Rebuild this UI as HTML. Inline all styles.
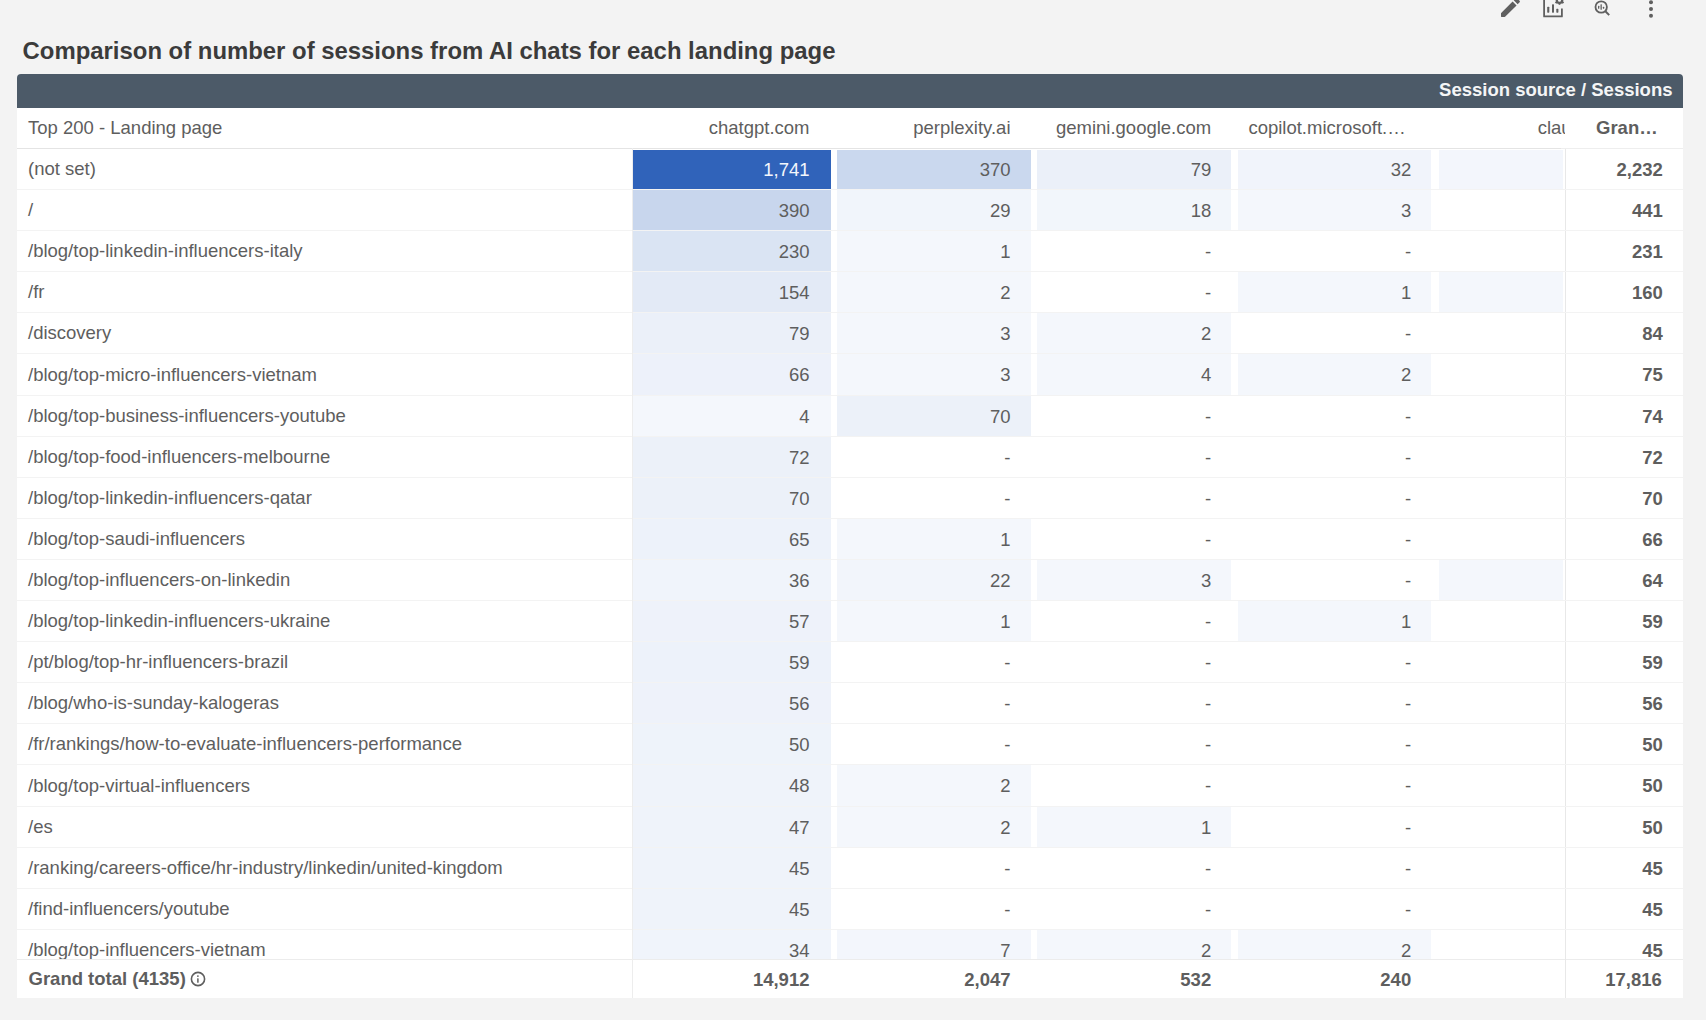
<!DOCTYPE html>
<html><head><meta charset="utf-8"><style>
html,body{margin:0;padding:0}
body{width:1706px;height:1020px;background:#f3f3f3;position:relative;overflow:hidden;font-family:"Liberation Sans",sans-serif}
.a{position:absolute;white-space:nowrap}
.t{font-size:18.5px;color:#5e5e5e;line-height:20px}
.n{text-align:right}
.b{font-weight:bold}
.r{position:absolute;height:1px;background:#f3f3f3}
</style></head><body>

<div class="a" style="left:22.6px;top:36.7px;font-size:23.9px;font-weight:bold;color:#3b3b3b;line-height:28px">Comparison of number of sessions from AI chats for each landing page</div>
<svg class="a" style="left:1490px;top:0px" width="180" height="24" viewBox="1490 0 180 24">
<path transform="translate(1497.85,-5.05) scale(1.05)" fill="#5f5f5f" d="M3 17.46v3.04c0 .28.22.5.5.5h3.04c.13 0 .26-.05.35-.15L17.81 9.94l-3.75-3.75L3.15 17.1c-.1.1-.15.22-.15.36zM20.71 7.04c.39-.39.39-1.02 0-1.41l-2.34-2.34c-.39-.39-1.02-.39-1.41 0l-1.83 1.83 3.75 3.75 1.83-1.83z"/>
<g fill="none" stroke="#5f5f5f" stroke-width="1.8" stroke-linejoin="round">
<path d="M1544.1 -4 V16.4 H1561.9 V8.6"/>
<circle cx="1559.5" cy="0.2" r="2.7" stroke-width="2.3"/></g><g fill="#5f5f5f"><rect x="1558.6" y="2.6" width="1.8" height="2.2"/><rect x="1555.2" y="1.6" width="2" height="1.8" transform="rotate(45 1556.2 2.5)"/><rect x="1561.8" y="1.6" width="2" height="1.8" transform="rotate(-45 1562.8 2.5)"/></g><g fill="none" stroke="#5f5f5f" stroke-width="1.8" stroke-linejoin="round">
<circle cx="1601.2" cy="7" r="5.7"/>
<path d="M1605.4 11.3 L1609.2 15.1" stroke-width="2"/>
</g>
<g fill="#5f5f5f">
<rect x="1547.2" y="6.7" width="2.1" height="6" rx="0.6"/>
<rect x="1552" y="4.3" width="2" height="8.4" rx="0.6"/>
<rect x="1556.3" y="8.8" width="2.1" height="3.9" rx="0.6"/>
<rect x="1598" y="5.8" width="1.3" height="3" rx="0.5"/>
<rect x="1600.5" y="4.2" width="1.3" height="5.6" rx="0.5"/>
<rect x="1602.9" y="6.8" width="1.3" height="2" rx="0.5"/>
<circle cx="1651" cy="2.3" r="2"/>
<circle cx="1651" cy="8.9" r="2"/>
<circle cx="1651" cy="15.7" r="2"/>
</g>
</svg>
<div class="a" style="left:17px;top:74px;width:1666px;height:924px;background:#fff;border-radius:4px 4px 0 0;overflow:hidden">
<div class="a" style="left:0;top:0;width:1666px;height:34px;background:#4c5a68"></div>
<div class="a b" style="right:10.5px;top:6.200000000000003px;font-size:18.5px;color:#f4f5f6;line-height:20px">Session source / Sessions</div>
<div class="a t" style="left:11.00px;top:44.40px;">Top 200 - Landing page</div>
<div class="a t n" style="right:873.50px;top:44.40px;">chatgpt.com</div>
<div class="a t n" style="right:672.50px;top:44.40px;">perplexity.ai</div>
<div class="a t n" style="right:471.80px;top:44.40px;">gemini.google.com</div>
<div class="a t" style="left:1231.40px;top:44.40px;width:157.60px;overflow:hidden;text-overflow:ellipsis">copilot.microsoft.com</div>
<div class="a t n" style="right:71.30px;top:44.40px;">claude.ai</div>
<div class="a" style="left:0;top:74px;width:1666px;height:1px;background:#e4e4e4"></div>
<div class="a" style="left:616px;top:76px;width:198px;height:39px;background:rgb(48,99,186)"></div>
<div class="a" style="left:820px;top:76px;width:194px;height:39px;background:rgb(202,216,238)"></div>
<div class="a" style="left:1020px;top:76px;width:194px;height:39px;background:rgb(235,240,249)"></div>
<div class="a" style="left:1221px;top:76px;width:193px;height:39px;background:rgb(241,244,251)"></div>
<div class="a" style="left:1422px;top:76px;width:195px;height:39px;background:rgb(243,246,252)"></div>
<div class="a t" style="left:11.00px;top:85.00px;">(not set)</div>
<div class="a t n" style="right:873.50px;top:85.50px;color:#f4f7fc;">1,741</div>
<div class="a t n" style="right:672.50px;top:85.50px;">370</div>
<div class="a t n" style="right:471.80px;top:85.50px;">79</div>
<div class="a t n" style="right:271.80px;top:85.50px;">32</div>
<div class="a t n" style="right:71.30px;top:85.50px;">10</div>
<div class="a" style="left:616px;top:116px;width:198px;height:40px;background:rgb(200,214,237)"></div>
<div class="a" style="left:820px;top:116px;width:194px;height:40px;background:rgb(241,245,251)"></div>
<div class="a" style="left:1020px;top:116px;width:194px;height:40px;background:rgb(242,246,251)"></div>
<div class="a" style="left:1221px;top:116px;width:193px;height:40px;background:rgb(244,247,252)"></div>
<div class="a t" style="left:11.00px;top:126.00px;">/</div>
<div class="a t n" style="right:873.50px;top:126.50px;">390</div>
<div class="a t n" style="right:672.50px;top:126.50px;">29</div>
<div class="a t n" style="right:471.80px;top:126.50px;">18</div>
<div class="a t n" style="right:271.80px;top:126.50px;">3</div>
<div class="a t n" style="right:71.30px;top:126.50px;">-</div>
<div class="a" style="left:616px;top:157px;width:198px;height:40px;background:rgb(218,228,243)"></div>
<div class="a" style="left:820px;top:157px;width:194px;height:40px;background:rgb(244,247,252)"></div>
<div class="a t" style="left:11.00px;top:167.00px;">/blog/top-linkedin-influencers-italy</div>
<div class="a t n" style="right:873.50px;top:167.50px;">230</div>
<div class="a t n" style="right:672.50px;top:167.50px;">1</div>
<div class="a t n" style="right:471.80px;top:167.50px;">-</div>
<div class="a t n" style="right:271.80px;top:167.50px;">-</div>
<div class="a t n" style="right:71.30px;top:167.50px;">-</div>
<div class="a" style="left:616px;top:198px;width:198px;height:40px;background:rgb(227,234,246)"></div>
<div class="a" style="left:820px;top:198px;width:194px;height:40px;background:rgb(244,247,252)"></div>
<div class="a" style="left:1221px;top:198px;width:193px;height:40px;background:rgb(244,247,252)"></div>
<div class="a" style="left:1422px;top:198px;width:195px;height:40px;background:rgb(244,247,252)"></div>
<div class="a t" style="left:11.00px;top:208.00px;">/fr</div>
<div class="a t n" style="right:873.50px;top:208.50px;">154</div>
<div class="a t n" style="right:672.50px;top:208.50px;">2</div>
<div class="a t n" style="right:471.80px;top:208.50px;">-</div>
<div class="a t n" style="right:271.80px;top:208.50px;">1</div>
<div class="a t n" style="right:71.30px;top:208.50px;">3</div>
<div class="a" style="left:616px;top:239px;width:198px;height:40px;background:rgb(235,240,249)"></div>
<div class="a" style="left:820px;top:239px;width:194px;height:40px;background:rgb(244,247,252)"></div>
<div class="a" style="left:1020px;top:239px;width:194px;height:40px;background:rgb(244,247,252)"></div>
<div class="a t" style="left:11.00px;top:249.00px;">/discovery</div>
<div class="a t n" style="right:873.50px;top:249.50px;">79</div>
<div class="a t n" style="right:672.50px;top:249.50px;">3</div>
<div class="a t n" style="right:471.80px;top:249.50px;">2</div>
<div class="a t n" style="right:271.80px;top:249.50px;">-</div>
<div class="a t n" style="right:71.30px;top:249.50px;">-</div>
<div class="a" style="left:616px;top:280px;width:198px;height:41px;background:rgb(237,241,250)"></div>
<div class="a" style="left:820px;top:280px;width:194px;height:41px;background:rgb(244,247,252)"></div>
<div class="a" style="left:1020px;top:280px;width:194px;height:41px;background:rgb(244,247,252)"></div>
<div class="a" style="left:1221px;top:280px;width:193px;height:41px;background:rgb(244,247,252)"></div>
<div class="a t" style="left:11.00px;top:290.50px;">/blog/top-micro-influencers-vietnam</div>
<div class="a t n" style="right:873.50px;top:291.00px;">66</div>
<div class="a t n" style="right:672.50px;top:291.00px;">3</div>
<div class="a t n" style="right:471.80px;top:291.00px;">4</div>
<div class="a t n" style="right:271.80px;top:291.00px;">2</div>
<div class="a t n" style="right:71.30px;top:291.00px;">-</div>
<div class="a" style="left:616px;top:322px;width:198px;height:40px;background:rgb(244,247,252)"></div>
<div class="a" style="left:820px;top:322px;width:194px;height:40px;background:rgb(236,241,249)"></div>
<div class="a t" style="left:11.00px;top:332.00px;">/blog/top-business-influencers-youtube</div>
<div class="a t n" style="right:873.50px;top:332.50px;">4</div>
<div class="a t n" style="right:672.50px;top:332.50px;">70</div>
<div class="a t n" style="right:471.80px;top:332.50px;">-</div>
<div class="a t n" style="right:271.80px;top:332.50px;">-</div>
<div class="a t n" style="right:71.30px;top:332.50px;">-</div>
<div class="a" style="left:616px;top:363px;width:198px;height:40px;background:rgb(236,241,249)"></div>
<div class="a t" style="left:11.00px;top:373.00px;">/blog/top-food-influencers-melbourne</div>
<div class="a t n" style="right:873.50px;top:373.50px;">72</div>
<div class="a t n" style="right:672.50px;top:373.50px;">-</div>
<div class="a t n" style="right:471.80px;top:373.50px;">-</div>
<div class="a t n" style="right:271.80px;top:373.50px;">-</div>
<div class="a t n" style="right:71.30px;top:373.50px;">-</div>
<div class="a" style="left:616px;top:404px;width:198px;height:40px;background:rgb(236,241,249)"></div>
<div class="a t" style="left:11.00px;top:414.00px;">/blog/top-linkedin-influencers-qatar</div>
<div class="a t n" style="right:873.50px;top:414.50px;">70</div>
<div class="a t n" style="right:672.50px;top:414.50px;">-</div>
<div class="a t n" style="right:471.80px;top:414.50px;">-</div>
<div class="a t n" style="right:271.80px;top:414.50px;">-</div>
<div class="a t n" style="right:71.30px;top:414.50px;">-</div>
<div class="a" style="left:616px;top:445px;width:198px;height:40px;background:rgb(237,242,250)"></div>
<div class="a" style="left:820px;top:445px;width:194px;height:40px;background:rgb(244,247,252)"></div>
<div class="a t" style="left:11.00px;top:455.00px;">/blog/top-saudi-influencers</div>
<div class="a t n" style="right:873.50px;top:455.50px;">65</div>
<div class="a t n" style="right:672.50px;top:455.50px;">1</div>
<div class="a t n" style="right:471.80px;top:455.50px;">-</div>
<div class="a t n" style="right:271.80px;top:455.50px;">-</div>
<div class="a t n" style="right:71.30px;top:455.50px;">-</div>
<div class="a" style="left:616px;top:486px;width:198px;height:40px;background:rgb(240,244,251)"></div>
<div class="a" style="left:820px;top:486px;width:194px;height:40px;background:rgb(242,245,251)"></div>
<div class="a" style="left:1020px;top:486px;width:194px;height:40px;background:rgb(244,247,252)"></div>
<div class="a" style="left:1422px;top:486px;width:195px;height:40px;background:rgb(244,247,252)"></div>
<div class="a t" style="left:11.00px;top:496.00px;">/blog/top-influencers-on-linkedin</div>
<div class="a t n" style="right:873.50px;top:496.50px;">36</div>
<div class="a t n" style="right:672.50px;top:496.50px;">22</div>
<div class="a t n" style="right:471.80px;top:496.50px;">3</div>
<div class="a t n" style="right:271.80px;top:496.50px;">-</div>
<div class="a t n" style="right:71.30px;top:496.50px;">3</div>
<div class="a" style="left:616px;top:527px;width:198px;height:40px;background:rgb(238,242,250)"></div>
<div class="a" style="left:820px;top:527px;width:194px;height:40px;background:rgb(244,247,252)"></div>
<div class="a" style="left:1221px;top:527px;width:193px;height:40px;background:rgb(244,247,252)"></div>
<div class="a t" style="left:11.00px;top:537.00px;">/blog/top-linkedin-influencers-ukraine</div>
<div class="a t n" style="right:873.50px;top:537.50px;">57</div>
<div class="a t n" style="right:672.50px;top:537.50px;">1</div>
<div class="a t n" style="right:471.80px;top:537.50px;">-</div>
<div class="a t n" style="right:271.80px;top:537.50px;">1</div>
<div class="a t n" style="right:71.30px;top:537.50px;">-</div>
<div class="a" style="left:616px;top:568px;width:198px;height:40px;background:rgb(237,242,250)"></div>
<div class="a t" style="left:11.00px;top:578.00px;">/pt/blog/top-hr-influencers-brazil</div>
<div class="a t n" style="right:873.50px;top:578.50px;">59</div>
<div class="a t n" style="right:672.50px;top:578.50px;">-</div>
<div class="a t n" style="right:471.80px;top:578.50px;">-</div>
<div class="a t n" style="right:271.80px;top:578.50px;">-</div>
<div class="a t n" style="right:71.30px;top:578.50px;">-</div>
<div class="a" style="left:616px;top:609px;width:198px;height:40px;background:rgb(238,242,250)"></div>
<div class="a t" style="left:11.00px;top:619.00px;">/blog/who-is-sunday-kalogeras</div>
<div class="a t n" style="right:873.50px;top:619.50px;">56</div>
<div class="a t n" style="right:672.50px;top:619.50px;">-</div>
<div class="a t n" style="right:471.80px;top:619.50px;">-</div>
<div class="a t n" style="right:271.80px;top:619.50px;">-</div>
<div class="a t n" style="right:71.30px;top:619.50px;">-</div>
<div class="a" style="left:616px;top:650px;width:198px;height:40px;background:rgb(238,243,250)"></div>
<div class="a t" style="left:11.00px;top:660.00px;">/fr/rankings/how-to-evaluate-influencers-performance</div>
<div class="a t n" style="right:873.50px;top:660.50px;">50</div>
<div class="a t n" style="right:672.50px;top:660.50px;">-</div>
<div class="a t n" style="right:471.80px;top:660.50px;">-</div>
<div class="a t n" style="right:271.80px;top:660.50px;">-</div>
<div class="a t n" style="right:71.30px;top:660.50px;">-</div>
<div class="a" style="left:616px;top:691px;width:198px;height:41px;background:rgb(239,243,250)"></div>
<div class="a" style="left:820px;top:691px;width:194px;height:41px;background:rgb(244,247,252)"></div>
<div class="a t" style="left:11.00px;top:701.50px;">/blog/top-virtual-influencers</div>
<div class="a t n" style="right:873.50px;top:702.00px;">48</div>
<div class="a t n" style="right:672.50px;top:702.00px;">2</div>
<div class="a t n" style="right:471.80px;top:702.00px;">-</div>
<div class="a t n" style="right:271.80px;top:702.00px;">-</div>
<div class="a t n" style="right:71.30px;top:702.00px;">-</div>
<div class="a" style="left:616px;top:733px;width:198px;height:40px;background:rgb(239,243,250)"></div>
<div class="a" style="left:820px;top:733px;width:194px;height:40px;background:rgb(244,247,252)"></div>
<div class="a" style="left:1020px;top:733px;width:194px;height:40px;background:rgb(244,247,252)"></div>
<div class="a t" style="left:11.00px;top:743.00px;">/es</div>
<div class="a t n" style="right:873.50px;top:743.50px;">47</div>
<div class="a t n" style="right:672.50px;top:743.50px;">2</div>
<div class="a t n" style="right:471.80px;top:743.50px;">1</div>
<div class="a t n" style="right:271.80px;top:743.50px;">-</div>
<div class="a t n" style="right:71.30px;top:743.50px;">-</div>
<div class="a" style="left:616px;top:774px;width:198px;height:40px;background:rgb(239,243,250)"></div>
<div class="a t" style="left:11.00px;top:784.00px;">/ranking/careers-office/hr-industry/linkedin/united-kingdom</div>
<div class="a t n" style="right:873.50px;top:784.50px;">45</div>
<div class="a t n" style="right:672.50px;top:784.50px;">-</div>
<div class="a t n" style="right:471.80px;top:784.50px;">-</div>
<div class="a t n" style="right:271.80px;top:784.50px;">-</div>
<div class="a t n" style="right:71.30px;top:784.50px;">-</div>
<div class="a" style="left:616px;top:815px;width:198px;height:40px;background:rgb(239,243,250)"></div>
<div class="a t" style="left:11.00px;top:825.00px;">/find-influencers/youtube</div>
<div class="a t n" style="right:873.50px;top:825.50px;">45</div>
<div class="a t n" style="right:672.50px;top:825.50px;">-</div>
<div class="a t n" style="right:471.80px;top:825.50px;">-</div>
<div class="a t n" style="right:271.80px;top:825.50px;">-</div>
<div class="a t n" style="right:71.30px;top:825.50px;">-</div>
<div class="a" style="left:616px;top:856px;width:198px;height:40px;background:rgb(240,244,251)"></div>
<div class="a" style="left:820px;top:856px;width:194px;height:40px;background:rgb(243,246,252)"></div>
<div class="a" style="left:1020px;top:856px;width:194px;height:40px;background:rgb(244,247,252)"></div>
<div class="a" style="left:1221px;top:856px;width:193px;height:40px;background:rgb(244,247,252)"></div>
<div class="a t" style="left:11.00px;top:866.00px;">/blog/top-influencers-vietnam</div>
<div class="a t n" style="right:873.50px;top:866.50px;">34</div>
<div class="a t n" style="right:672.50px;top:866.50px;">7</div>
<div class="a t n" style="right:471.80px;top:866.50px;">2</div>
<div class="a t n" style="right:271.80px;top:866.50px;">2</div>
<div class="a t n" style="right:71.30px;top:866.50px;">-</div>
<div class="r" style="left:0;top:115px;width:1666px;background:#f3f3f3"></div>
<div class="r" style="left:0;top:156px;width:1666px;background:#f3f3f3"></div>
<div class="r" style="left:0;top:197px;width:1666px;background:#f3f3f3"></div>
<div class="r" style="left:0;top:238px;width:1666px;background:#f3f3f3"></div>
<div class="r" style="left:0;top:279px;width:1666px;background:#f3f3f3"></div>
<div class="r" style="left:0;top:321px;width:1666px;background:#f3f3f3"></div>
<div class="r" style="left:0;top:362px;width:1666px;background:#f3f3f3"></div>
<div class="r" style="left:0;top:403px;width:1666px;background:#f3f3f3"></div>
<div class="r" style="left:0;top:444px;width:1666px;background:#f3f3f3"></div>
<div class="r" style="left:0;top:485px;width:1666px;background:#f3f3f3"></div>
<div class="r" style="left:0;top:526px;width:1666px;background:#f3f3f3"></div>
<div class="r" style="left:0;top:567px;width:1666px;background:#f3f3f3"></div>
<div class="r" style="left:0;top:608px;width:1666px;background:#f3f3f3"></div>
<div class="r" style="left:0;top:649px;width:1666px;background:#f3f3f3"></div>
<div class="r" style="left:0;top:690px;width:1666px;background:#f3f3f3"></div>
<div class="r" style="left:0;top:732px;width:1666px;background:#f3f3f3"></div>
<div class="r" style="left:0;top:773px;width:1666px;background:#f3f3f3"></div>
<div class="r" style="left:0;top:814px;width:1666px;background:#f3f3f3"></div>
<div class="r" style="left:0;top:855px;width:1666px;background:#f3f3f3"></div>
<div class="a" style="left:615px;top:74px;width:1px;height:850px;background:#ededed"></div>
<div class="a" style="left:1546px;top:74px;width:2px;height:850px;background:#fff"></div>
<div class="a" style="left:1548px;top:34px;width:118px;height:890px;background:#fff"></div>
<div class="a" style="left:1548px;top:75px;width:1px;height:849px;background:#e8e8e8"></div>
<div class="a t b" style="left:1579.00px;top:44.40px;">Gran…</div>
<div class="r" style="left:1544px;top:74px;width:122px;background:#eeeeee"></div>
<div class="r" style="left:1544px;top:115px;width:122px"></div>
<div class="r" style="left:1544px;top:156px;width:122px"></div>
<div class="r" style="left:1544px;top:197px;width:122px"></div>
<div class="r" style="left:1544px;top:238px;width:122px"></div>
<div class="r" style="left:1544px;top:279px;width:122px"></div>
<div class="r" style="left:1544px;top:321px;width:122px"></div>
<div class="r" style="left:1544px;top:362px;width:122px"></div>
<div class="r" style="left:1544px;top:403px;width:122px"></div>
<div class="r" style="left:1544px;top:444px;width:122px"></div>
<div class="r" style="left:1544px;top:485px;width:122px"></div>
<div class="r" style="left:1544px;top:526px;width:122px"></div>
<div class="r" style="left:1544px;top:567px;width:122px"></div>
<div class="r" style="left:1544px;top:608px;width:122px"></div>
<div class="r" style="left:1544px;top:649px;width:122px"></div>
<div class="r" style="left:1544px;top:690px;width:122px"></div>
<div class="r" style="left:1544px;top:732px;width:122px"></div>
<div class="r" style="left:1544px;top:773px;width:122px"></div>
<div class="r" style="left:1544px;top:814px;width:122px"></div>
<div class="r" style="left:1544px;top:855px;width:122px"></div>
<div class="r" style="left:1544px;top:896px;width:122px"></div>
<div class="a t b n" style="right:20.20px;top:85.50px;">2,232</div>
<div class="a t b n" style="right:20.20px;top:126.50px;">441</div>
<div class="a t b n" style="right:20.20px;top:167.50px;">231</div>
<div class="a t b n" style="right:20.20px;top:208.50px;">160</div>
<div class="a t b n" style="right:20.20px;top:249.50px;">84</div>
<div class="a t b n" style="right:20.20px;top:291.00px;">75</div>
<div class="a t b n" style="right:20.20px;top:332.50px;">74</div>
<div class="a t b n" style="right:20.20px;top:373.50px;">72</div>
<div class="a t b n" style="right:20.20px;top:414.50px;">70</div>
<div class="a t b n" style="right:20.20px;top:455.50px;">66</div>
<div class="a t b n" style="right:20.20px;top:496.50px;">64</div>
<div class="a t b n" style="right:20.20px;top:537.50px;">59</div>
<div class="a t b n" style="right:20.20px;top:578.50px;">59</div>
<div class="a t b n" style="right:20.20px;top:619.50px;">56</div>
<div class="a t b n" style="right:20.20px;top:660.50px;">50</div>
<div class="a t b n" style="right:20.20px;top:702.00px;">50</div>
<div class="a t b n" style="right:20.20px;top:743.50px;">50</div>
<div class="a t b n" style="right:20.20px;top:784.50px;">45</div>
<div class="a t b n" style="right:20.20px;top:825.50px;">45</div>
<div class="a t b n" style="right:20.20px;top:866.50px;">45</div>
<div class="a" style="left:0;top:885px;width:1666px;height:38px;background:#fff;border-top:1px solid #ececec"></div>
<div class="a t b" style="left:11.50px;top:895.20px;">Grand total (4135)</div>
<svg class="a" style="left:172.5px;top:897px" width="16" height="16" viewBox="0 0 16 16"><circle cx="8" cy="8" r="6.6" fill="none" stroke="#5e5e5e" stroke-width="1.6"/><rect x="7.15" y="7.2" width="1.5" height="4.5" rx="0.5" fill="#5e5e5e"/><circle cx="7.9" cy="5.1" r="0.9" fill="#5e5e5e"/></svg>
<div class="a t b n" style="right:873.50px;top:895.70px;">14,912</div>
<div class="a t b n" style="right:672.50px;top:895.70px;">2,047</div>
<div class="a t b n" style="right:471.80px;top:895.70px;">532</div>
<div class="a t b n" style="right:271.80px;top:895.70px;">240</div>
<div class="a" style="left:615px;top:885px;width:1px;height:39px;background:#ededed"></div>
<div class="a" style="left:1548px;top:885px;width:1px;height:39px;background:#e8e8e8"></div>
<div class="a t b n" style="right:21.20px;top:895.70px;">17,816</div>
</div>
</body></html>
